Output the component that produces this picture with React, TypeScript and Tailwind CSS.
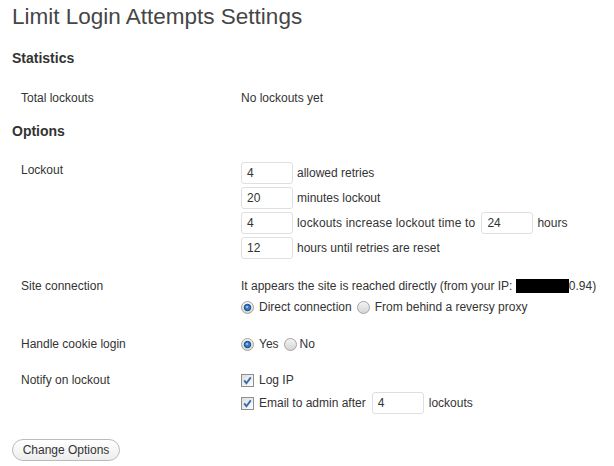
import React from "react";

function Radio({ checked }: { checked?: boolean }) {
  return (
    <svg width="13" height="13" viewBox="0 0 13 13" className="shrink-0">
      <defs>
        <linearGradient id={checked ? "rg1" : "rg2"} x1="0" y1="0" x2="0" y2="1">
          <stop offset="0" stopColor="#f4f4f4" />
          <stop offset="1" stopColor="#d4d4d4" />
        </linearGradient>
      </defs>
      <circle cx="6.5" cy="6.5" r="6" fill={`url(#${checked ? "rg1" : "rg2"})`} stroke="#a3a3a3" strokeWidth="1" />
      {checked && (
        <>
          <circle cx="6.5" cy="6.5" r="3.2" fill="#2f7fd0" stroke="#1f3f66" strokeWidth="1" />
          <circle cx="6" cy="6" r="1.1" fill="#9cd0ff" />
        </>
      )}
    </svg>
  );
}

function Checkbox() {
  return (
    <svg width="13" height="13" viewBox="0 0 13 13" className="shrink-0">
      <defs>
        <linearGradient id="cbg" x1="0" y1="0" x2="1" y2="1">
          <stop offset="0" stopColor="#dcdcdc" />
          <stop offset="1" stopColor="#ffffff" />
        </linearGradient>
      </defs>
      <rect x="0.5" y="0.5" width="12" height="12" fill="url(#cbg)" stroke="#8e8f8f" strokeWidth="1" />
      <path d="M3.2 6.4 L5.4 9.2 L9.8 3.4" fill="none" stroke="#3a66b0" strokeWidth="1.8" />
    </svg>
  );
}

function Field({ value, className = "" }: { value: string; className?: string }) {
  return (
    <input
      readOnly
      value={value}
      className={`w-[52px] h-[22px] shrink-0 border border-[#dfdfdf] rounded-[3px] bg-white px-[5px] text-[12px] leading-[20px] text-[#333] outline-none ${className}`}
    />
  );
}

export default function App() {
  return (
    <div className="w-[614px] h-[466px] bg-white pl-[12px] font-['Liberation_Sans',Arial,sans-serif] text-[12px] leading-[16px] text-[#333]">
      <h2 className="pt-[3px] text-[22.5px] leading-[28px] text-[#464646] font-normal">
        Limit Login Attempts Settings
      </h2>

      <h3 className="mt-[18px] text-[14px] leading-[18px] font-bold text-[#333]">Statistics</h3>

      <div className="mt-[23px] grid grid-cols-[229px_1fr]">
        <div className="pl-[9px]">Total lockouts</div>
        <div>No lockouts yet</div>
      </div>

      <h3 className="mt-[16px] text-[14px] leading-[18px] font-bold text-[#333]">Options</h3>

      <div className="mt-[22px] grid grid-cols-[229px_1fr]">
        <div className="pl-[9px]">Lockout</div>
        <div className="flex flex-col gap-[3px]">
          <div className="flex items-center">
            <Field value="4" />
            <span className="ml-[4px]">allowed retries</span>
          </div>
          <div className="flex items-center">
            <Field value="20" />
            <span className="ml-[4px]">minutes lockout</span>
          </div>
          <div className="flex items-center">
            <Field value="4" />
            <span className="ml-[4px] tracking-[0.15px]">lockouts increase lockout time to</span>
            <Field value="24" className="ml-[6px]" />
            <span className="ml-[4px]">hours</span>
          </div>
          <div className="flex items-center">
            <Field value="12" />
            <span className="ml-[4px]">hours until retries are reset</span>
          </div>
        </div>
      </div>

      <div className="mt-[19px] grid grid-cols-[229px_1fr]">
        <div className="pl-[9px]">Site connection</div>
        <div>
          <div className="flex items-center whitespace-nowrap">
            <span>It appears the site is reached directly (from your IP:&nbsp;</span>
            <span className="inline-block w-[53px] h-[14px] bg-black" />
            <span>0.94)</span>
          </div>
          <div className="mt-[5px] flex items-center h-[16px]">
            <Radio checked />
            <span className="ml-[5px]">Direct connection</span>
            <span className="ml-[5px]">
              <Radio />
            </span>
            <span className="ml-[5px]">From behind a reversy proxy</span>
          </div>
        </div>
      </div>

      <div className="mt-[21px] grid grid-cols-[229px_1fr]">
        <div className="pl-[9px]">Handle cookie login</div>
        <div className="flex items-center h-[16px]">
          <Radio checked />
          <span className="ml-[5px]">Yes</span>
          <span className="ml-[5px]">
            <Radio />
          </span>
          <span className="ml-[3px]">No</span>
        </div>
      </div>

      <div className="mt-[20px] grid grid-cols-[229px_1fr]">
        <div className="pl-[9px]">Notify on lockout</div>
        <div>
          <div className="flex items-center h-[16px]">
            <Checkbox />
            <span className="ml-[5px]">Log IP</span>
          </div>
          <div className="mt-[4px] flex items-center">
            <Checkbox />
            <span className="ml-[5px]">Email to admin after</span>
            <Field value="4" className="ml-[6px]" />
            <span className="ml-[5px]">lockouts</span>
          </div>
        </div>
      </div>

      <div className="mt-[25px]">
        <button className="h-[22px] w-[108px] rounded-full border border-[#bbbbbb] bg-gradient-to-b from-white to-[#ededed] text-[12px] leading-[20px] text-[#333]">
          Change Options
        </button>
      </div>
    </div>
  );
}
